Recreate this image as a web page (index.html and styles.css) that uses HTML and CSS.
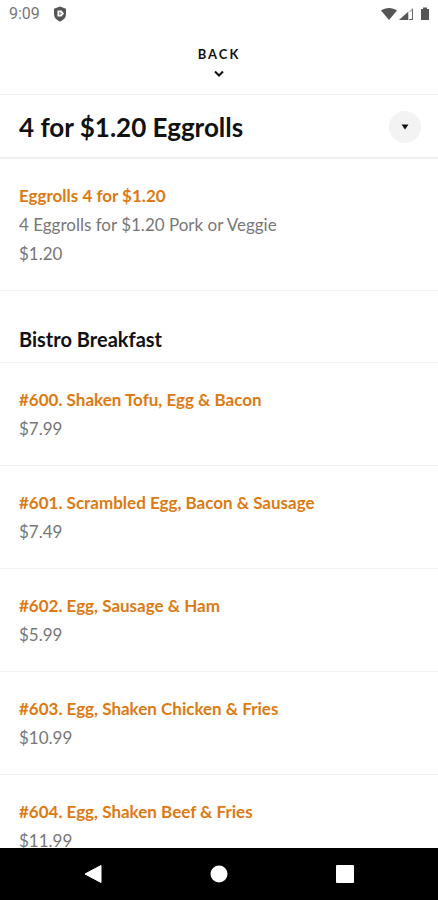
FILE: index.html
```html
<!DOCTYPE html>
<html lang="en">
<head>
<meta charset="utf-8">
<meta name="viewport" content="width=device-width, initial-scale=1">
<title>Menu</title>
<link rel="stylesheet" href="styles.css">
</head>
<body>
<div class="status">
  <span class="time">9:09</span>
  <svg class="shield" width="14" height="16" viewBox="0 0 14 16" aria-hidden="true"><path d="M7 .5 13 2.800V8c0 3.600-2.600 6.300-6 7.500C3.600 14.300 1 11.600 1 8V2.800z" fill="#555"/><path d="M4.500 4.500h4L11 7.500 8.500 10.500h-4z" fill="#fff"/><path d="M6 5.500 9 7.500 6 9.500z" fill="#999"/></svg>
  <svg class="signals" width="52" height="16" viewBox="0 0 52 16" aria-hidden="true">
    <path d="M1 4.500C5.500 1 12.500 1 17 4.500L9 14z" fill="#555"/>
    <path d="M33 1.500V14H19z" fill="#ccc"/><path d="M28 6V14H19z" fill="#555"/><path d="M29 6h3v7h-3z" fill="#fff"/><path d="M32 3h1v11h-4v-1h3z" fill="#666"/>
    <path d="M43 1.500h4V3h2v11h-8V3h2z" fill="#555"/>
  </svg>
</div>
<header class="top">
  <button class="back" type="button">BACK
    <svg width="12" height="8" viewBox="0 0 12 8" aria-hidden="true"><path d="M2 1.500 6 5.500 10 1.500" fill="none" stroke="#111" stroke-width="2"/></svg>
  </button>
</header>
<div class="current">
  <h1>4 for $1.20 Eggrolls</h1>
  <button class="toggle" type="button" aria-label="Choose category">
    <svg width="8" height="6" viewBox="0 0 8 6" aria-hidden="true"><path d="M.5.5h7L4 5.500z" fill="#111"/></svg>
  </button>
</div>
<main class="menu">
  <ul class="items">
    <li><a href="#eggrolls">Eggrolls 4 for $1.20</a><p>4 Eggrolls for $1.20 Pork or Veggie</p><p>$1.20</p></li>
  </ul>
  <h2>Bistro Breakfast</h2>
  <ul class="items">
    <li><a href="#600">#600. Shaken Tofu, Egg &amp; Bacon</a><p>$7.99</p></li>
    <li><a href="#601">#601. Scrambled Egg, Bacon &amp; Sausage</a><p>$7.49</p></li>
    <li><a href="#602">#602. Egg, Sausage &amp; Ham</a><p>$5.99</p></li>
    <li><a href="#603">#603. Egg, Shaken Chicken &amp; Fries</a><p>$10.99</p></li>
    <li><a href="#604">#604. Egg, Shaken Beef &amp; Fries</a><p>$11.99</p></li>
  </ul>
</main>
<nav class="system">
  <button type="button" aria-label="Back"><svg width="18" height="20" viewBox="0 0 18 20"><path d="M1 10 17 1.500v17z" fill="#fff" stroke="#fff" stroke-linejoin="round"/></svg></button>
  <button type="button" aria-label="Home"><svg width="18" height="18" viewBox="0 0 18 18"><circle cx="9" cy="9" r="8.500" fill="#fff"/></svg></button>
  <button type="button" aria-label="Recent apps"><svg width="18" height="18" viewBox="0 0 18 18"><rect width="18" height="18" rx="1" fill="#fff"/></svg></button>
</nav>
</body>
</html>
```
FILE: styles.css
```css
* { box-sizing: border-box; }
body {
  margin: 0;
  height: 100vh;
  display: flex;
  flex-direction: column;
  overflow: hidden;
  background: #fff;
  color: #111;
  font-family: Lato, "Liberation Sans", sans-serif;
  font-size: 17px;
}
h1, h2, p, ul { margin: 0; padding: 0; }
button { border: 0; padding: 0; background: none; color: inherit; font: inherit; }
svg { display: block; }
.status {
  flex: none;
  display: flex;
  align-items: center;
  height: 28px;
  padding: 0 6px 0 9px;
}
.time { color: #777; font-family: Roboto, sans-serif; font-size: 16px; line-height: 20px; }
.shield { margin-left: 13px; }
.signals { margin-left: auto; }
.top {
  flex: none;
  display: flex;
  justify-content: center;
  padding: 16px 0;
  border-bottom: 1px solid #f0f0f0;
}
.back {
  display: flex;
  flex-direction: column;
  align-items: center;
  gap: 6px;
  font-size: 13px;
  font-weight: 700;
  line-height: 20px;
  letter-spacing: 2px;
}
.current {
  flex: none;
  display: flex;
  align-items: center;
  justify-content: space-between;
  padding: 16px 17px 14px 19px;
  border-bottom: 2px solid #f0f0f0;
}
h1 { font-size: 26px; line-height: 32px; font-weight: 700; }
.toggle {
  display: grid;
  place-items: center;
  width: 32px;
  height: 32px;
  border-radius: 50%;
  background: #f3f3f3;
}
.menu { flex: 1; min-height: 0; overflow: hidden; }
h2 {
  padding: 34px 19px 9px;
  border-bottom: 1px solid #f0f0f0;
  font-size: 20px;
  line-height: 28px;
  font-weight: 700;
}
.items { list-style: none; }
.items li {
  padding: 22px 19px;
  border-bottom: 1px solid #f0f0f0;
  line-height: 29px;
}
.items a { display: block; color: #dc7a14; font-weight: 700; text-decoration: none; }
.items p { color: #777; }
.system {
  flex: none;
  display: flex;
  align-items: center;
  justify-content: space-between;
  height: 52px;
  padding: 0 84px;
  background: #000;
}
```
